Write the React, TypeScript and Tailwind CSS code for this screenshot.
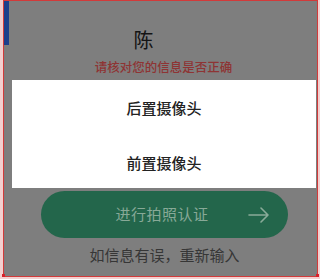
import React from 'react'

const cjk = { fontFamily: '"Noto Sans CJK SC", "Noto Sans", sans-serif' }

function SheetItem({ label, shift }: { label: string; shift?: boolean }) {
  return (
    <div className={`flex h-[53px] items-center justify-center text-[15px] font-medium text-[#222] ${shift ? 'pt-[3px]' : ''}`}>
      {label}
    </div>
  )
}

export default function App() {
  return (
    <div className="relative h-[279px] w-[320px] overflow-hidden bg-[#f3d0d0]" style={cjk}>
      {/* frame */}
      <div className="relative ml-[3px] h-[277px] w-[315px] overflow-hidden border border-[#d23a3a] bg-[#7e7e7e]">
        {/* blue accent */}
        <div className="absolute left-0 top-0 h-[44px] w-[5px] bg-[#1c3f8c]" />

        {/* page under overlay */}
        <div className="flex flex-col items-center">
          <div className="mt-[27px] h-[24px] pr-[34px] text-[20px] leading-[24px] text-[#141414]">陈</div>
          <div className="mt-[7px] pl-[6px] text-[12.5px] font-medium leading-[16px] text-[#8e3434]">
            请核对您的信息是否正确
          </div>
          <div className="ml-[7px] mt-[116px] flex h-[47px] w-[247px] items-center rounded-full bg-[#23664b] pl-[36px] pr-[18px]">
            <span className="flex-1 text-center text-[15px] tracking-[0.5px] text-[#87a997]">进行拍照认证</span>
            <svg width="22" height="16" viewBox="0 0 22 16" fill="none" stroke="#8aab99" strokeWidth="1.6" strokeLinecap="round" strokeLinejoin="round">
              <path d="M1 8h19M13 1l7 7-7 7" />
            </svg>
          </div>
          <div className="mt-[6px] pl-[8px] text-[15px] leading-[22px] text-[#363636]">如信息有误，重新输入</div>
        </div>

        {/* action sheet */}
        <div className="absolute left-[8px] right-[1px] top-[79px] bg-white pt-[2px]">
          <SheetItem label="后置摄像头" />
          <SheetItem label="前置摄像头" shift />
        </div>
      </div>
      <div className="absolute bottom-[2px] left-[2px] h-[3px] w-[3px] bg-[#d8202a]" />
      <div className="absolute bottom-[2px] right-[1px] h-[3px] w-[3px] bg-[#d8202a]" />
    </div>
  )
}
